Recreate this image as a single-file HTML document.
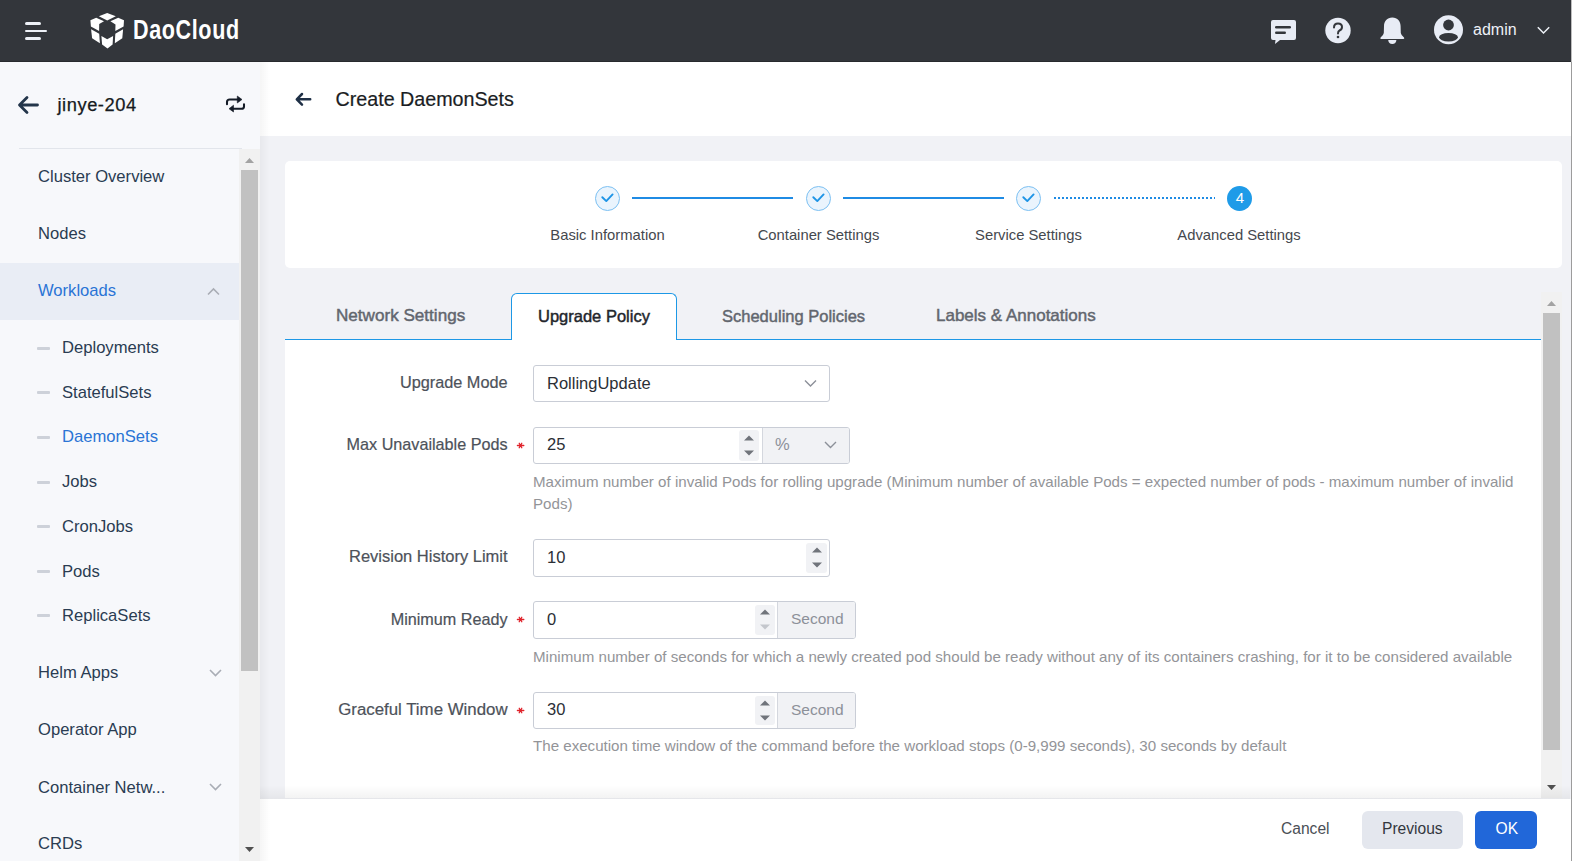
<!DOCTYPE html>
<html><head><meta charset="utf-8">
<style>
*{margin:0;padding:0;box-sizing:border-box}
html,body{width:1572px;height:861px;overflow:hidden;background:#f1f2f6;font-family:"Liberation Sans",sans-serif}
.a{position:absolute}
.t{position:absolute;white-space:nowrap;line-height:1}
#hdr{left:0;top:0;width:1572px;height:62px;background:#33363b}
#side{left:0;top:62px;width:260px;height:799px;background:#f7f8fb}
#phdr{left:260px;top:62px;width:1312px;height:74px;background:#fff}
.nav{font-size:16.6px;color:#2a3c52;left:38px}
.sub{font-size:16.6px;color:#2a3c52;left:62px}
.dash{position:absolute;left:37px;width:13px;height:3px;background:#cdd1d9;border-radius:1px}
.lbl{font-size:16.2px;color:#4d525a;right:1064.4px;text-align:right;-webkit-text-stroke:0.2px currentColor}
.req{position:absolute;color:#e2343b;font-size:15px;left:516px;line-height:1}
.inp{position:absolute;border:1px solid #c9cdd6;border-radius:3px;background:#fff}
.val{font-size:16.5px;color:#2b2f36}
.help{font-size:15.12px;color:#939498}
.spin{position:absolute;background:#f1f2f5;border-radius:3px}
.unit{position:absolute;background:#f1f2f5;border-left:1px solid #d4d7de}
.tab{color:#62666e;-webkit-text-stroke:0.45px currentColor}
.steplbl{font-size:14.8px;color:#45484e;width:200px;text-align:center;top:227.6px}
.circ{position:absolute;width:25px;height:25px;border-radius:50%;border:1px solid #7cc0f2;background:#eaf4fd;top:186px}
.sline{position:absolute;top:197px;height:2px;background:#1f8be4}
</style></head><body>

<!-- header -->
<div id="hdr" class="a">
  <div class="a" style="left:25px;top:22px;width:16px;height:3px;border-radius:2px;background:#eef1f7"></div>
  <div class="a" style="left:25px;top:29.5px;width:22px;height:2.5px;border-radius:1px;background:#eef1f7"></div>
  <div class="a" style="left:25px;top:37px;width:16px;height:3px;border-radius:2px;background:#eef1f7"></div>
  <!-- logo -->
  <svg class="a" style="left:86px;top:10px" width="44" height="42" viewBox="0 0 44 42">
    <g fill="#fff">
      <path d="M12.9 6.3 L21.2 2.9 L29.8 6.3 L21.2 10.5 Z"/>
      <path d="M4.4 10.2 L10.2 7.8 L18 11.2 L13.2 14.1 L13.1 21 L4.9 16.6 Z"/>
      <path d="M24.4 11.2 L32.2 7.8 L38 10.2 L37.6 16.6 L29.3 21 L29.5 14.4 Z"/>
      <path d="M5.1 19.3 L13.2 23.7 L13.9 33.2 L6.1 28.3 Z"/>
      <path d="M29.3 23.7 L37.1 19.3 L36.3 28.3 L28.8 33.2 Z"/>
      <path d="M15.4 25.9 L21.2 29.3 L27.1 25.9 L26.6 34.6 L21.5 38.5 L16.1 34.6 Z"/>
    </g>
  </svg>
  <div class="t" style="left:132.5px;top:15.8px;font-size:28px;font-weight:bold;color:#fff;letter-spacing:0.8px;transform:scaleX(0.77);transform-origin:0 0">DaoCloud</div>
  <!-- right icons -->
  <svg class="a" style="left:1268px;top:17px" width="30" height="30" viewBox="0 0 30 30">
    <path d="M5 3 H26 Q28 3 28 5 V21 Q28 23 26 23 H12 L7 27 L7.5 23 H5 Q3 23 3 21 V5 Q3 3 5 3 Z" fill="#e8ecf5"/>
    <rect x="7" y="9" width="16" height="2.6" rx="1.3" fill="#33363b"/>
    <rect x="7" y="14.5" width="11" height="2.6" rx="1.3" fill="#33363b"/>
  </svg>
  <svg class="a" style="left:1324px;top:17px" width="28" height="28" viewBox="0 0 28 28">
    <circle cx="14" cy="13.5" r="12.7" fill="#e8ecf5"/>
    <path d="M10 10.5 Q10 6.5 14 6.5 Q18 6.5 18 10 Q18 12.5 15.5 13.5 Q14 14.2 14 16.5" fill="none" stroke="#33363b" stroke-width="2" stroke-linecap="round"/>
    <circle cx="14" cy="20" r="1.3" fill="#33363b"/>
  </svg>
  <svg class="a" style="left:1378px;top:16px" width="28" height="30" viewBox="0 0 28 30">
    <path d="M14.3 1.6 C19.6 1.6 22.5 5.5 22.6 10 L22.8 17 Q23.2 19.5 26 21.6 Q26.8 23 25.5 23 H3 Q1.8 23 2.6 21.6 Q5.4 19.5 5.8 17 L6 10 C6.1 5.5 9.1 1.6 14.3 1.6 Z" fill="#e8ecf5"/>
    <path d="M10.2 24 H18.4 Q18 28.1 14.3 28.1 Q10.6 28.1 10.2 24 Z" fill="#e8ecf5"/>
  </svg>
  <svg class="a" style="left:1433px;top:14px" width="32" height="32" viewBox="0 0 32 32">
    <circle cx="15.5" cy="15.8" r="14.5" fill="#e8ecf5"/>
    <circle cx="15.5" cy="11" r="5.4" fill="#33363b"/>
    <ellipse cx="15.5" cy="23.3" rx="9.4" ry="4.2" fill="#33363b"/>
  </svg>
  <div class="t" style="left:1473px;top:21.6px;font-size:16px;color:#eef1f7">admin</div>
  <svg class="a" style="left:1536px;top:25px" width="15" height="10" viewBox="0 0 15 10">
    <path d="M1.8 2.2 L7.5 8 L13.2 2.2" fill="none" stroke="#eef1f7" stroke-width="1.5"/>
  </svg>
  <div class="a" style="left:0;top:61px;width:1572px;height:1px;background:#282a2e"></div>
</div>

<!-- sidebar -->
<div id="side" class="a"></div>
<svg class="a" style="left:16px;top:95px" width="24" height="20" viewBox="0 0 24 20">
  <path d="M21.5 10 H4 M11 2.5 L3.5 10 L11 17.5" fill="none" stroke="#23354a" stroke-width="2.8" stroke-linecap="round" stroke-linejoin="round"/>
</svg>
<div class="t" style="left:57.5px;top:96px;font-size:18.3px;letter-spacing:0.55px;color:#161a20;-webkit-text-stroke:0.25px currentColor">jinye-204</div>
<svg class="a" style="left:215px;top:88px" width="40" height="34" viewBox="0 0 40 34">
  <path d="M12 16.2 V14 Q12 11.5 14.8 11.5 H23" fill="none" stroke="#141b26" stroke-width="2.05" stroke-linecap="round"/>
  <path d="M22.3 8 L27 11.5 L22.3 15 Z" fill="#141b26" stroke="#141b26" stroke-width="0.6" stroke-linejoin="round"/>
  <path d="M29 16.2 V18.4 Q29 20.8 26.4 20.8 H18" fill="none" stroke="#141b26" stroke-width="2.05" stroke-linecap="round"/>
  <path d="M18.5 17.2 L14 20.7 L18.5 24 Z" fill="#141b26" stroke="#141b26" stroke-width="0.6" stroke-linejoin="round"/>
</svg>
<div class="a" style="left:19px;top:148px;width:223px;height:1px;background:#e2e5eb"></div>

<div class="t nav" style="top:169.1px">Cluster Overview</div>
<div class="t nav" style="top:225.8px">Nodes</div>
<div class="a" style="left:0;top:263px;width:239px;height:57px;background:#e9edf5"></div>
<div class="t nav" style="top:282.9px;color:#2a74d5">Workloads</div>
<svg class="a" style="left:206px;top:286px" width="15" height="10" viewBox="0 0 15 10">
  <path d="M2 8.5 L7.5 3 L13 8.5" fill="none" stroke="#a9adb5" stroke-width="1.6"/>
</svg>

<div class="dash" style="top:346.5px"></div><div class="t sub" style="top:340.3px">Deployments</div>
<div class="dash" style="top:391.3px"></div><div class="t sub" style="top:385.2px">StatefulSets</div>
<div class="dash" style="top:435.5px"></div><div class="t sub" style="top:429.3px;color:#2a74d5">DaemonSets</div>
<div class="dash" style="top:480.5px"></div><div class="t sub" style="top:474.4px">Jobs</div>
<div class="dash" style="top:524.6px"></div><div class="t sub" style="top:518.5px">CronJobs</div>
<div class="dash" style="top:569.6px"></div><div class="t sub" style="top:563.5px">Pods</div>
<div class="dash" style="top:614.0px"></div><div class="t sub" style="top:607.9px">ReplicaSets</div>

<div class="t nav" style="top:665.4px">Helm Apps</div>
<svg class="a" style="left:208px;top:668px" width="15" height="10" viewBox="0 0 15 10">
  <path d="M2 2 L7.5 7.5 L13 2" fill="none" stroke="#a9adb5" stroke-width="1.6"/>
</svg>
<div class="t nav" style="top:722.4px">Operator App</div>
<div class="t nav" style="top:779.6px">Container Netw...</div>
<svg class="a" style="left:208px;top:782px" width="15" height="10" viewBox="0 0 15 10">
  <path d="M2 2 L7.5 7.5 L13 2" fill="none" stroke="#a9adb5" stroke-width="1.6"/>
</svg>
<div class="t nav" style="top:836.1px">CRDs</div>

<!-- sidebar scrollbar -->
<div class="a" style="left:239px;top:149px;width:21px;height:712px;background:#f1f1f1"></div>
<div class="a" style="left:241px;top:170px;width:17px;height:501px;background:#c1c1c1"></div>
<svg class="a" style="left:244px;top:157px" width="11" height="7" viewBox="0 0 11 7"><path d="M1 6 L5.5 1 L10 6 Z" fill="#a3a3a3"/></svg>
<svg class="a" style="left:244px;top:846px" width="11" height="7" viewBox="0 0 11 7"><path d="M1 1 L5.5 6 L10 1 Z" fill="#505050"/></svg>

<!-- page header -->
<div id="phdr" class="a"></div>
<svg class="a" style="left:293px;top:90px" width="21" height="18" viewBox="0 0 21 18">
  <path d="M17.2 9.3 H4.2 M9 4 L3.8 9.3 L9 14.6" fill="none" stroke="#1f3046" stroke-width="2.5" stroke-linecap="round" stroke-linejoin="round"/>
</svg>
<div class="t" style="left:335.5px;top:90.1px;font-size:19.7px;color:#1a1d23;-webkit-text-stroke:0.2px currentColor">Create DaemonSets</div>

<!-- steps card -->
<div class="a" style="left:285px;top:161px;width:1277px;height:107px;background:#fff;border-radius:5px"></div>
<div class="circ" style="left:595px"></div>
<div class="circ" style="left:806px"></div>
<div class="circ" style="left:1016px"></div>
<div class="a" style="left:1226.5px;top:186px;width:25px;height:25px;border-radius:50%;background:#1f9be8"></div>
<svg class="a" style="left:595px;top:186px" width="25" height="25" viewBox="0 0 25 25"><path d="M7.3 11.2 L11.3 15.1 L17.6 8.4" fill="none" stroke="#1e94e6" stroke-width="1.9" stroke-linecap="round" stroke-linejoin="round"/></svg>
<svg class="a" style="left:806px;top:186px" width="25" height="25" viewBox="0 0 25 25"><path d="M7.3 11.2 L11.3 15.1 L17.6 8.4" fill="none" stroke="#1e94e6" stroke-width="1.9" stroke-linecap="round" stroke-linejoin="round"/></svg>
<svg class="a" style="left:1016px;top:186px" width="25" height="25" viewBox="0 0 25 25"><path d="M7.3 11.2 L11.3 15.1 L17.6 8.4" fill="none" stroke="#1e94e6" stroke-width="1.9" stroke-linecap="round" stroke-linejoin="round"/></svg>
<div class="t" style="left:1227.5px;top:189.8px;width:25px;text-align:center;font-size:15px;color:#fff">4</div>
<div class="sline" style="left:632px;width:161px"></div>
<div class="sline" style="left:843px;width:161px"></div>
<div class="a" style="left:1054px;top:197px;width:161px;height:2px;background:repeating-linear-gradient(to right,#1f8be4 0 2px,transparent 2px 4px)"></div>
<div class="t steplbl" style="left:507.5px">Basic Information</div>
<div class="t steplbl" style="left:718.5px">Container Settings</div>
<div class="t steplbl" style="left:928.5px">Service Settings</div>
<div class="t steplbl" style="left:1139px">Advanced Settings</div>

<!-- tabs -->
<div class="a" style="left:285px;top:339px;width:1256px;height:1px;background:#1d98e6"></div>
<div class="a" style="left:511px;top:293px;width:166px;height:47px;background:#fff;border:1px solid #1d98e6;border-bottom:none;border-radius:6px 6px 0 0"></div>
<div class="t tab" style="left:336px;font-size:17.1px;top:307.1px">Network Settings</div>
<div class="t tab" style="left:538px;color:#23262c;font-size:16.5px;top:307.7px">Upgrade Policy</div>
<div class="t tab" style="left:722px;font-size:16.5px;top:307.7px">Scheduling Policies</div>
<div class="t tab" style="left:936px;font-size:17px;top:307.2px">Labels &amp; Annotations</div>

<!-- form panel -->
<div class="a" style="left:285px;top:340px;width:1256px;height:458px;background:#fff"></div>

<!-- row 1 -->
<div class="t lbl" style="top:374.2px;font-size:16.3px">Upgrade Mode</div>
<div class="inp" style="left:533px;top:365px;width:297px;height:37px"></div>
<div class="t val" style="left:547px;top:374.5px">RollingUpdate</div>
<svg class="a" style="left:803px;top:378px" width="15" height="11" viewBox="0 0 15 11"><path d="M2 2.5 L7.5 8 L13 2.5" fill="none" stroke="#8c9099" stroke-width="1.4"/></svg>

<!-- row 2 -->
<div class="t lbl" style="top:435.6px;font-size:16.2px">Max Unavailable Pods</div>
<svg class="a" style="left:516px;top:441px" width="9" height="9" viewBox="0 0 9 9"><path d="M1.4 4.5 H7.8 M3.2 2.2 L5.8 6.8 M5.8 2.2 L3.2 6.8" stroke="#e0232b" stroke-width="1.3" stroke-linecap="round"/></svg>
<div class="inp" style="left:533px;top:427px;width:317px;height:37px;overflow:hidden">
  <div class="unit" style="left:228px;top:0;width:89px;height:37px"></div>
</div>
<div class="spin" style="left:739px;top:430px;width:20px;height:31px"></div>
<svg class="a" style="left:743px;top:434px" width="12" height="24" viewBox="0 0 12 24"><path d="M1 6.5 L6 1.5 L11 6.5 Z M1 16.5 L6 21.5 L11 16.5 Z" fill="#70747b"/></svg>
<div class="t val" style="left:547px;top:436px">25</div>
<div class="t val" style="left:775px;top:436px;color:#8c9099">%</div>
<svg class="a" style="left:823px;top:440px" width="15" height="11" viewBox="0 0 15 11"><path d="M2 2 L7.5 7.5 L13 2" fill="none" stroke="#8c9099" stroke-width="1.4"/></svg>
<div class="t help" style="left:533px;top:473.5px">Maximum number of invalid Pods for rolling upgrade (Minimum number of available Pods = expected number of pods - maximum number of invalid</div>
<div class="t help" style="left:533px;top:495.6px">Pods)</div>

<!-- row 3 -->
<div class="t lbl" style="top:548.4px;font-size:16.5px">Revision History Limit</div>
<div class="inp" style="left:533px;top:539px;width:297px;height:38px"></div>
<div class="spin" style="left:806px;top:543px;width:21px;height:30px"></div>
<svg class="a" style="left:811px;top:546px" width="12" height="24" viewBox="0 0 12 24"><path d="M1 6.5 L6 1.5 L11 6.5 Z M1 16.5 L6 21.5 L11 16.5 Z" fill="#70747b"/></svg>
<div class="t val" style="left:547px;top:549.4px">10</div>

<!-- row 4 -->
<div class="t lbl" style="top:610.6px;font-size:16.2px">Minimum Ready</div>
<svg class="a" style="left:516px;top:615px" width="9" height="9" viewBox="0 0 9 9"><path d="M1.4 4.5 H7.8 M3.2 2.2 L5.8 6.8 M5.8 2.2 L3.2 6.8" stroke="#e0232b" stroke-width="1.3" stroke-linecap="round"/></svg>
<div class="inp" style="left:533px;top:601px;width:323px;height:38px;overflow:hidden">
  <div class="unit" style="left:243px;top:0;width:80px;height:38px"></div>
</div>
<div class="spin" style="left:755px;top:605px;width:20px;height:30px"></div>
<svg class="a" style="left:759px;top:608px" width="12" height="24" viewBox="0 0 12 24"><path d="M1 6.5 L6 1.5 L11 6.5 Z" fill="#70747b"/><path d="M1 16.5 L6 21.5 L11 16.5 Z" fill="#c3c6cc"/></svg>
<div class="t val" style="left:547px;top:611px">0</div>
<div class="t val" style="left:791px;top:611px;color:#8c9099;font-size:15.5px">Second</div>
<div class="t help" style="left:533px;top:648.5px">Minimum number of seconds for which a newly created pod should be ready without any of its containers crashing, for it to be considered available</div>

<!-- row 5 -->
<div class="t lbl" style="top:702.2px;font-size:16.85px">Graceful Time Window</div>
<svg class="a" style="left:516px;top:706px" width="9" height="9" viewBox="0 0 9 9"><path d="M1.4 4.5 H7.8 M3.2 2.2 L5.8 6.8 M5.8 2.2 L3.2 6.8" stroke="#e0232b" stroke-width="1.3" stroke-linecap="round"/></svg>
<div class="inp" style="left:533px;top:692px;width:323px;height:37px;overflow:hidden">
  <div class="unit" style="left:243px;top:0;width:80px;height:37px"></div>
</div>
<div class="spin" style="left:755px;top:696px;width:20px;height:29px"></div>
<svg class="a" style="left:759px;top:699px" width="12" height="24" viewBox="0 0 12 24"><path d="M1 6.5 L6 1.5 L11 6.5 Z M1 16.5 L6 21.5 L11 16.5 Z" fill="#70747b"/></svg>
<div class="t val" style="left:547px;top:701.1px">30</div>
<div class="t val" style="left:791px;top:701.5px;color:#8c9099;font-size:15.5px">Second</div>
<div class="t help" style="left:533px;top:738.1px">The execution time window of the command before the workload stops (0-9,999 seconds), 30 seconds by default</div>

<!-- content scrollbar -->
<div class="a" style="left:1541px;top:292px;width:21px;height:506px;background:#f1f1f1"></div>
<div class="a" style="left:1543px;top:313px;width:17px;height:437px;background:#c1c1c1"></div>
<svg class="a" style="left:1546px;top:300px" width="11" height="7" viewBox="0 0 11 7"><path d="M1 6 L5.5 1 L10 6 Z" fill="#a3a3a3"/></svg>
<svg class="a" style="left:1546px;top:784px" width="11" height="7" viewBox="0 0 11 7"><path d="M1 1 L5.5 6 L10 1 Z" fill="#505050"/></svg>

<!-- footer -->
<div class="a" style="left:260px;top:785px;width:1310px;height:14px;background:linear-gradient(to bottom,rgba(0,0,0,0),rgba(0,0,0,0.05))"></div>
<div class="a" style="left:260px;top:799px;width:1312px;height:62px;background:#fff"></div>
<div class="t" style="left:1281px;top:821.3px;font-size:15.6px;color:#4b4f56">Cancel</div>
<div class="a" style="left:1362px;top:811px;width:101px;height:38px;border-radius:6px;background:#e4e7ee"></div>
<div class="t" style="left:1382px;top:821.3px;font-size:15.6px;color:#33373e">Previous</div>
<div class="a" style="left:1475px;top:811px;width:62px;height:38px;border-radius:6px;background:#2167d9"></div>
<div class="t" style="left:1495.5px;top:821.3px;font-size:15.6px;color:#fff">OK</div>

<div class="a" style="left:260px;top:62px;width:10px;height:799px;background:linear-gradient(to right,rgba(0,0,0,0.04),rgba(0,0,0,0))"></div>
<!-- right edge line -->
<div class="a" style="left:1571px;top:0;width:1px;height:62px;background:#bdbdbd"></div><div class="a" style="left:1571px;top:62px;width:1px;height:799px;background:#9c9c9c"></div>
</body></html>
